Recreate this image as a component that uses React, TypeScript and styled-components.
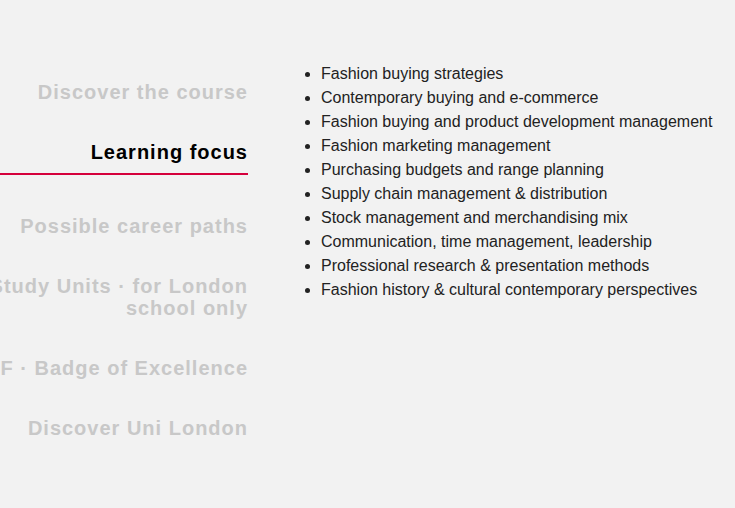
import React from "react";
import styled, { createGlobalStyle } from "styled-components";

const GlobalStyle = createGlobalStyle`
  html, body {
    margin: 0;
    padding: 0;
    background: #f2f2f2;
    font-family: "Liberation Sans", Arial, sans-serif;
  }
  body {
    width: 735px;
    height: 508px;
    overflow: hidden;
  }
`;

const Page = styled.div`
  display: flex;
  align-items: flex-start;
  padding-top: 62px;
  height: 508px;
  box-sizing: border-box;
  overflow: hidden;
  background: #f2f2f2;
`;

const Nav = styled.nav`
  flex: 0 0 300px;
  width: 300px;
  margin-left: -52px;
  display: flex;
  flex-direction: column;
`;

const NavItem = styled.a<{ $active?: boolean }>`
  display: block;
  padding: ${(p) => (p.$active ? "19px 0 21px" : "19px 0")};
  text-align: right;
  text-decoration: none;
  cursor: pointer;
`;

const NavLabel = styled.span<{ $active?: boolean }>`
  display: block;
  font-size: 20px;
  line-height: 22px;
  font-weight: 700;
  letter-spacing: 1px;
  color: ${(p) => (p.$active ? "#000" : "#c8c8c8")};
  padding-bottom: ${(p) => (p.$active ? "10px" : "0")};
  border-bottom: ${(p) => (p.$active ? "2px solid #d5003c" : "none")};
`;

const Content = styled.section`
  margin-left: 33px;
`;

const List = styled.ul`
  margin: 0;
  padding-left: 40px;
  list-style: disc;
  color: #222;
  font-size: 16px;
  line-height: 24px;
`;

const Item = styled.li`
  white-space: nowrap;
`;

const navItems = [
  "Discover the course",
  "Learning focus",
  "Possible career paths",
  "Study Units · for London school only",
  "BoF · Badge of Excellence",
  "Discover Uni London",
];

const focus = [
  "Fashion buying strategies",
  "Contemporary buying and e-commerce",
  "Fashion buying and product development management",
  "Fashion marketing management",
  "Purchasing budgets and range planning",
  "Supply chain management & distribution",
  "Stock management and merchandising mix",
  "Communication, time management, leadership",
  "Professional research & presentation methods",
  "Fashion history & cultural contemporary perspectives",
];

export default function App() {
  const active = 1;
  return (
    <>
      <GlobalStyle />
      <Page>
        <Nav>
          {navItems.map((label, i) => (
            <NavItem key={label} $active={i === active}>
              <NavLabel $active={i === active}>{label}</NavLabel>
            </NavItem>
          ))}
        </Nav>
        <Content>
          <List>
            {focus.map((f) => (
              <Item key={f}>{f}</Item>
            ))}
          </List>
        </Content>
      </Page>
    </>
  );
}
